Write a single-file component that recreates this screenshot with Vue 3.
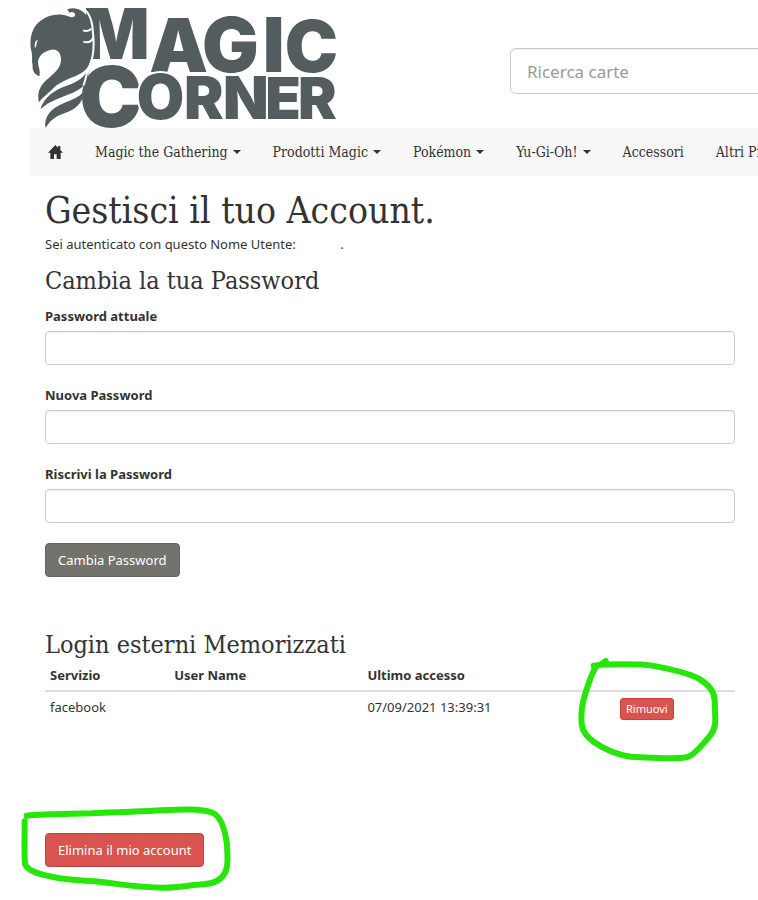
<template>
    <div class="page">
        <header class="header">
            <a class="logo" href="#" aria-label="Magic Corner">
                <svg viewBox="30 24 918 360" width="306" height="120">
                    <g class="word">
                        <text x="188" y="178" font-size="210">M</text>
                        <text x="388" y="216" font-size="222">A</text>
                        <text x="546" y="216" font-size="226">G</text>
                        <text x="728" y="216" font-size="226">I</text>
                        <text x="794" y="215" font-size="214">C</text>
                        <text class="cut" x="178" y="381" font-size="252">C</text>
                        <text class="cut" x="350" y="357" font-size="184">O</text>
                        <text x="492" y="356" font-size="178">R</text>
                        <text x="609" y="356" font-size="178">N</text>
                        <text x="736" y="356" font-size="174">E</text>
                        <text x="834" y="356" font-size="174">R</text>
                    </g>
                    <path class="bird" d="M58 229C43 223 36 211 38 195C34 184 39 164 33 150C27 112 38 78 62 62C86 43 118 39 145 49C158 55 167 49 165 42C163 36 155 34 148 38C146 32 141 30 143 28C164 20 193 28 205 58C224 98 225 158 206 196C190 232 134 230 98 267C82 282 66 294 57 307C49 278 62 253 84 236C107 217 123 202 123 178C123 158 111 147 95 149C76 151 58 165 55 180C51 197 63 207 58 229Z" />
                    <path class="bird" d="M61 328C73 290 105 269 144 256C178 244 194 228 204 210C210 237 195 263 159 278C122 293 88 302 61 328Z" />
                    <path class="bird" d="M76 384C71 347 96 324 132 309C158 298 178 292 189 276C192 306 168 328 137 338C109 347 92 359 76 384Z" />
                    <path class="line" d="M188 25C211 38 218 72 219 101C224 143 218 181 205 207C199 222 197 242 190 257" />
                    <path class="line" d="M189 91C201 95 208 94 214 86M190 125C204 130 213 126 220 113" />
                    <path class="eye" d="M45 145C42 131 45 122 54 119C49 127 51 137 45 145Z" />
                </svg>
            </a>
            <input class="search" type="text" placeholder="Ricerca carte" aria-label="Ricerca carte" />
        </header>

        <nav class="navbar">
            <a class="item" href="#" aria-label="Home">
                <svg class="home" viewBox="0 0 45 42" width="15" height="14">
                    <path d="M22 0L30 8V3H37V15L45 23H38V42H26V28H18V42H7V23H0Z" />
                </svg>
            </a>
            <a v-for="item in menu" :key="item.name" class="item" href="#">
                {{ item.name }}<i v-if="item.drop" class="caret"></i>
            </a>
        </nav>

        <main class="content">
            <h1>Gestisci il tuo Account.</h1>
            <p class="auth">Sei autenticato con questo Nome Utente: <span class="user"></span>.</p>

            <form @submit.prevent>
                <h2>Cambia la tua Password</h2>
                <div v-for="field in fields" :key="field.id" class="group">
                    <label :for="field.id">{{ field.label }}</label>
                    <input :id="field.id" v-model="field.value" type="password" />
                </div>
                <button class="btn" type="submit">Cambia Password</button>
            </form>

            <section class="logins">
                <h2>Login esterni Memorizzati</h2>
                <table>
                    <thead>
                        <tr>
                            <th class="service">Servizio</th>
                            <th class="username">User Name</th>
                            <th>Ultimo accesso</th>
                            <th class="action"></th>
                        </tr>
                    </thead>
                    <tbody>
                        <tr v-for="login in logins" :key="login.service">
                            <td>{{ login.service }}</td>
                            <td>{{ login.user }}</td>
                            <td>{{ login.date }}</td>
                            <td class="remove">
                                <div class="marked">
                                    <button class="btn danger small" type="button">Rimuovi</button>
                                    <svg class="mark mark-remove" viewBox="0 0 594 390" width="198" height="130">
                                        <path d="M137 63L120 75L101 77M120 74C175 73 235 70 276 77C320 85 381 98 415 115C445 132 463 154 464 181L466 240C467 263 457 281 442 297C424 316 405 345 380 352C330 359 267 352 211 350C172 344 132 327 102 306C81 291 67 276 65 252C62 219 67 188 76 160C87 128 94 101 107 82" />
                                    </svg>
                                </div>
                            </td>
                        </tr>
                    </tbody>
                </table>
            </section>

            <div class="marked">
                <button class="btn danger" type="button">Elimina il mio account</button>
                <svg class="mark mark-delete" viewBox="0 0 720 315" width="240" height="105">
                    <path d="M50 62C105 56 180 57 245 55C320 50 395 50 455 46C512 43 574 40 607 53C636 65 646 109 651 150C652 181 657 209 646 231C636 253 611 266 581 268C540 270 505 278 462 278C390 279 320 265 255 259C211 256 160 254 122 244C86 237 53 228 45 207C42 166 44 120 44 79" />
                </svg>
            </div>
        </main>
    </div>
</template>

<script setup>
import { ref } from 'vue';

const menu = [
    { name: 'Magic the Gathering', drop: true },
    { name: 'Prodotti Magic', drop: true },
    { name: 'Pokémon', drop: true },
    { name: 'Yu-Gi-Oh!', drop: true },
    { name: 'Accessori', drop: false },
    { name: 'Altri Prodotti', drop: true },
];

const fields = ref([
    { id: 'old-password', label: 'Password attuale', value: '' },
    { id: 'new-password', label: 'Nuova Password', value: '' },
    { id: 'confirm-password', label: 'Riscrivi la Password', value: '' },
]);

const logins = ref([
    { service: 'facebook', user: '', date: '07/09/2021 13:39:31' },
]);
</script>

<style>
body {
    margin: 0;
    background: #fff;
}
</style>

<style scoped>
.page {
    overflow: hidden;
    padding: 8px 0 33px 30px;
    box-sizing: border-box;
    font-family: "Segoe UI", "Noto Sans", sans-serif;
    font-size: 13px;
    line-height: 20px;
    color: #333;
}

.header {
    display: flex;
    align-items: flex-start;
    gap: 174px;
}

.logo {
    flex: none;
    height: 120px;
}

.logo svg {
    display: block;
}

.word {
    font-family: Inter, sans-serif;
    font-weight: 900;
    fill: #535c5e;
}

.cut {
    stroke: #fff;
    stroke-width: 12px;
    paint-order: stroke;
}

.bird {
    fill: #535c5e;
}

.line {
    fill: none;
    stroke: #fff;
    stroke-width: 6px;
}

.eye {
    fill: #fff;
}

.search {
    flex: none;
    width: 480px;
    height: 46px;
    margin-top: 40px;
    padding: 10px 16px;
    box-sizing: border-box;
    border: 1px solid #ccc;
    border-radius: 6px;
    box-shadow: inset 0 1px 1px rgba(0, 0, 0, 0.075);
    font-family: inherit;
    font-size: 17px;
}

.search::placeholder {
    color: #999;
}

.navbar {
    display: flex;
    height: 48px;
    padding-left: 2px;
    background: #f7f7f7;
    font-family: "Roboto Slab", "DejaVu Serif Condensed", "DejaVu Serif", serif;
    font-size: 14px;
}

.item {
    display: flex;
    flex: none;
    align-items: center;
    padding: 0 16px;
    color: #333;
    text-decoration: none;
}

.home {
    fill: #333;
}

.caret {
    margin-left: 5px;
    border-top: 4px solid #333;
    border-right: 4px solid transparent;
    border-left: 4px solid transparent;
}

.content {
    padding: 15px 23px 0 15px;
}

h1,
h2 {
    margin: 0;
    font-family: "Roboto Slab", "DejaVu Serif Condensed", "DejaVu Serif", serif;
    font-weight: 400;
}

h1 {
    font-size: 37px;
    line-height: 40px;
}

h2 {
    font-size: 25px;
    line-height: 26px;
}

.auth {
    margin: 3px 0 14px;
}

.user {
    display: inline-block;
    width: 41px;
}

.group {
    margin-bottom: 20px;
}

h2 + .group {
    margin-top: 12px;
}

.group label {
    display: block;
    margin-bottom: 5px;
    font-weight: 700;
}

.group input {
    display: block;
    width: 100%;
    height: 34px;
    padding: 6px 12px;
    box-sizing: border-box;
    border: 1px solid #ccc;
    border-radius: 4px;
    box-shadow: inset 0 1px 1px rgba(0, 0, 0, 0.075);
}

.btn {
    display: block;
    padding: 6px 12px;
    border: 1px solid #686862;
    border-radius: 4px;
    background: #73736c;
    color: #fff;
    font-family: inherit;
    font-size: 13px;
    line-height: 20px;
}

.danger {
    border-color: #c9403c;
    background: #d9534f;
}

.small {
    padding: 1px 5px;
    border-radius: 3px;
    font-size: 11px;
    line-height: 18px;
}

.logins {
    margin: 55px 0 108px;
}

table {
    width: 100%;
    margin-top: 2px;
    border-collapse: collapse;
    table-layout: fixed;
}

th,
td {
    padding: 5px;
    text-align: left;
    vertical-align: top;
}

th {
    height: 20px;
    border-bottom: 2px solid #ddd;
}

.remove {
    padding-top: 6px;
}

.service {
    width: 18%;
    box-sizing: border-box;
}

.username {
    width: 28%;
    box-sizing: border-box;
}

.action {
    width: 120px;
    box-sizing: border-box;
}

.marked {
    position: relative;
    width: max-content;
}

.mark {
    position: absolute;
    fill: none;
    stroke: #27e60a;
    stroke-width: 18px;
    stroke-linecap: round;
    stroke-linejoin: round;
    pointer-events: none;
}

.mark-remove {
    top: -58px;
    left: -60px;
}

.mark-delete {
    top: -38px;
    left: -35px;
}
</style>
